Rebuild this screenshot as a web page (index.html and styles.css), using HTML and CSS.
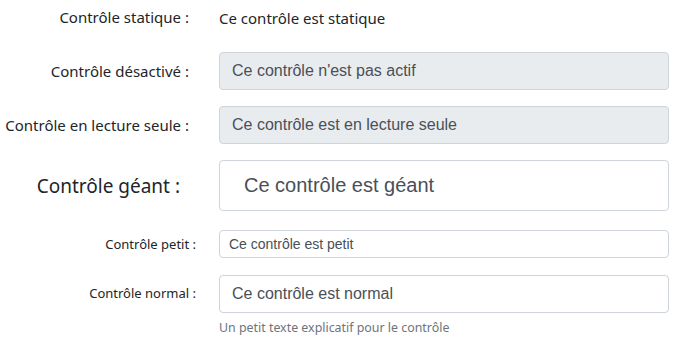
FILE: index.html
```html
<!DOCTYPE html>
<html lang="fr">
<head>
<meta charset="utf-8">
<link rel="stylesheet" href="styles.css">
</head>
<body>
<form class="form">
  <div class="row row-static">
    <label class="lbl">Contrôle statique :</label>
    <div class="field"><p class="static">Ce contrôle est statique</p></div>
  </div>
  <div class="row">
    <label class="lbl">Contrôle désactivé :</label>
    <div class="field"><input class="ctl" type="text" value="Ce contrôle n'est pas actif" disabled></div>
  </div>
  <div class="row">
    <label class="lbl">Contrôle en lecture seule :</label>
    <div class="field"><input class="ctl" type="text" value="Ce contrôle est en lecture seule" readonly></div>
  </div>
  <div class="row row-lg">
    <label class="lbl lbl-lg">Contrôle géant :</label>
    <div class="field"><input class="ctl ctl-lg" type="text" value="Ce contrôle est géant"></div>
  </div>
  <div class="row row-sm">
    <label class="lbl lbl-sm">Contrôle petit :</label>
    <div class="field"><input class="ctl ctl-sm" type="text" value="Ce contrôle est petit"></div>
  </div>
  <div class="row row-last">
    <label class="lbl lbl-sm lbl-top">Contrôle normal :</label>
    <div class="field">
      <input class="ctl ctl-white" type="text" value="Ce contrôle est normal">
      <small class="help">Un petit texte explicatif pour le contrôle</small>
    </div>
  </div>
</form>
</body>
</html>
```
FILE: styles.css
```css
html, body {
  margin: 0;
  padding: 0;
  background: #fff;
}
body {
  font-family: "Noto Sans", "Open Sans", sans-serif;
  color: #212529;
}
.form {
  display: flex;
  flex-direction: column;
  gap: 16px;
  padding: 0 6px 0 0;
}
.row {
  display: grid;
  grid-template-columns: 204px 1fr;
  align-items: center;
}
.row-static { margin-top: -2px; }
.row-lg { margin-bottom: 3px; }
.row-sm { margin-bottom: 1px; }
.row-last { align-items: start; }
.lbl {
  text-align: right;
  padding-right: 15px;
  font-size: 15px;
  line-height: 20px;
}
.lbl-lg {
  font-size: 19px;
  padding-right: 24px;
}
.lbl-sm {
  font-size: 13px;
  padding-right: 8px;
}
.lbl-top { padding-top: 8px; }
.field {
  padding-left: 15px;
  display: flex;
  flex-direction: column;
}
.static {
  margin: 0;
  padding: 7px 0 5px;
  font-size: 15px;
  line-height: 26px;
  color: #212529;
}
.ctl {
  box-sizing: border-box;
  width: 100%;
  height: 38px;
  margin: 0;
  padding: 6px 12px;
  font-family: "Liberation Sans", Arial, sans-serif;
  font-size: 16px;
  color: #495057;
  background: #e9ecef;
  border: 1px solid #ced4da;
  border-radius: 4px;
  outline: none;
}
.ctl:disabled { color: #495057; opacity: 1; }
.ctl-lg {
  height: 51px;
  padding: 8px 24px;
  font-size: 20px;
  background: #fff;
}
.ctl-sm {
  height: 28px;
  padding: 4px 9px;
  font-size: 14px;
  background: #fff;
}
.ctl-white { background: #fff; }
.help {
  margin-top: 7px;
  font-size: 12.4px;
  line-height: 16px;
  color: #6c757d;
}
```
